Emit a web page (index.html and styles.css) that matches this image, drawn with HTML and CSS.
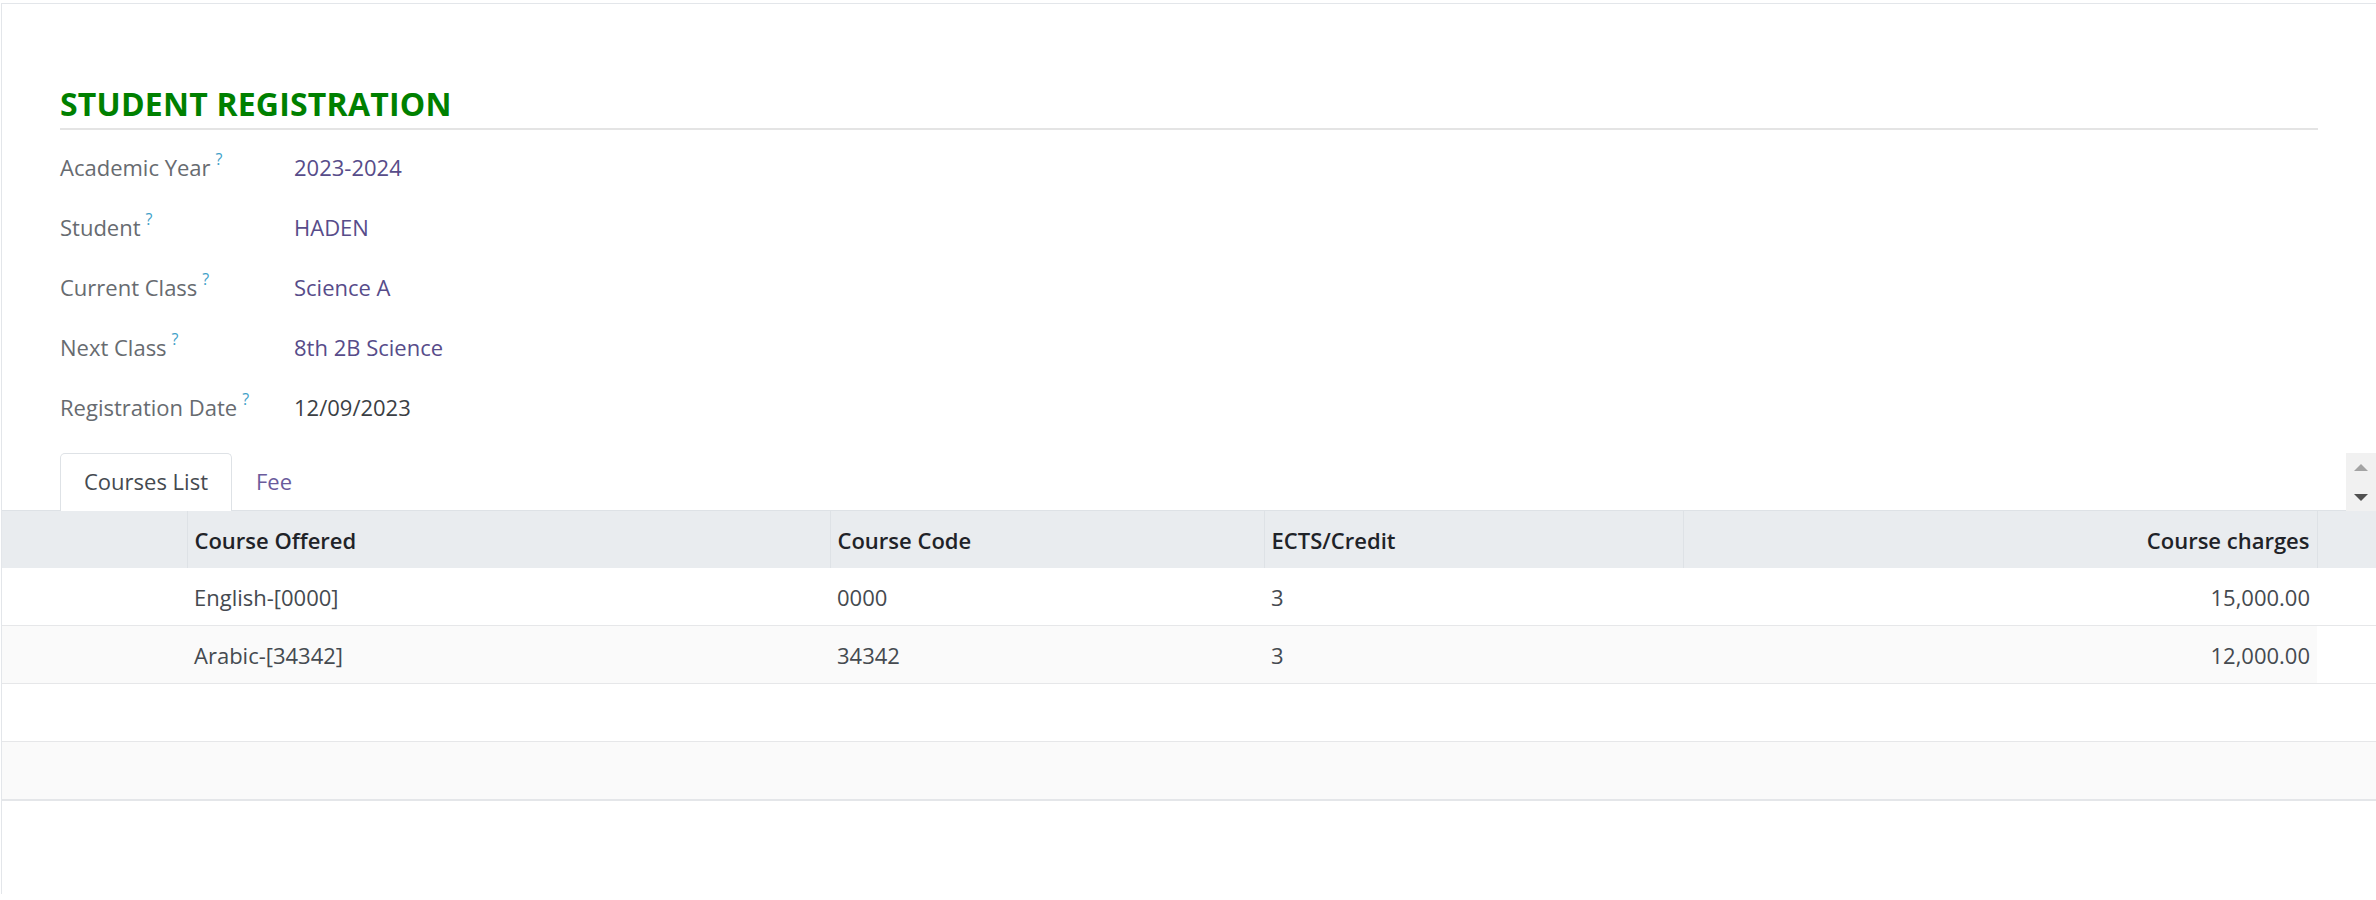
FILE: index.html
```html
<!DOCTYPE html>
<html>
<head>
<meta charset="utf-8">
<title>Student Registration</title>
<link rel="stylesheet" href="styles.css">
</head>
<body>
<div class="sheet">
  <div class="form">
    <h1 class="title">STUDENT REGISTRATION</h1>
    <div class="fields">
      <div class="field"><div class="label">Academic Year<sup class="tip">?</sup></div><div class="value link">2023-2024</div></div>
      <div class="field"><div class="label">Student<sup class="tip">?</sup></div><div class="value link">HADEN</div></div>
      <div class="field"><div class="label">Current Class<sup class="tip">?</sup></div><div class="value link">Science A</div></div>
      <div class="field"><div class="label">Next Class<sup class="tip">?</sup></div><div class="value link">8th 2B Science</div></div>
      <div class="field"><div class="label">Registration Date<sup class="tip">?</sup></div><div class="value">12/09/2023</div></div>
    </div>
  </div>
  <div class="nav">
    <div class="tab active">Courses List</div>
    <div class="tab">Fee</div>
    <div class="scroller">
      <svg width="30" height="58" viewBox="0 0 30 58">
        <polygon points="8,18 22,18 15,11" fill="#a3a3a3"/>
        <polygon points="8,41 22,41 15,48" fill="#505050"/>
      </svg>
    </div>
  </div>
  <table class="list">
    <colgroup>
      <col class="c-handle">
      <col class="c-course">
      <col class="c-code">
      <col class="c-credit">
      <col class="c-charge">
      <col class="c-extra">
    </colgroup>
    <thead>
      <tr>
        <th></th>
        <th>Course Offered</th>
        <th>Course Code</th>
        <th>ECTS/Credit</th>
        <th class="num">Course charges</th>
        <th></th>
      </tr>
    </thead>
    <tbody>
      <tr class="rec">
        <td></td><td>English-[0000]</td><td>0000</td><td>3</td><td class="num">15,000.00</td><td class="blank"></td>
      </tr>
      <tr class="rec odd">
        <td></td><td>Arabic-[34342]</td><td>34342</td><td>3</td><td class="num">12,000.00</td><td class="blank"></td>
      </tr>
      <tr class="empty"><td colspan="6"></td></tr>
      <tr class="empty odd last"><td colspan="6"></td></tr>
    </tbody>
  </table>
</div>
</body>
</html>
```
FILE: styles.css
```css
html, body {
  margin: 0;
  padding: 0;
  background: #ffffff;
}
body {
  font-family: "Open Sans", "Noto Sans", sans-serif;
  font-size: 22px;
  color: #454a50;
}
.sheet {
  margin-top: 3px;
  margin-left: 1px;
  border-top: 1px solid #e3e6ea;
  border-left: 1px solid #e3e6ea;
  min-height: 890px;
}
.form {
  padding: 81px 58px 0 58px;
}
.title {
  margin: 0;
  font-size: 32px;
  line-height: 37px;
  font-weight: 700;
  color: #008000;
  letter-spacing: 0.2px;
  padding-bottom: 6px;
  border-bottom: 2px solid #e4e4e4;
}
.fields {
  margin-top: 7px;
  display: flex;
  flex-direction: column;
}
.field {
  display: flex;
  height: 60px;
  line-height: 60px;
}
.label {
  width: 234px;
  color: #676b70;
  white-space: nowrap;
}
.tip {
  font-size: 16px;
  line-height: 0;
  color: #3fa0c8;
  margin-left: 5px;
  vertical-align: 11px;
}
.value {
  color: #3b3f45;
}
.value.link {
  color: #574c8a;
}
.nav {
  margin-top: 16px;
  display: flex;
  align-items: flex-start;
  padding-left: 58px;
  border-bottom: 1px solid #dee2e6;
  height: 57px;
}
.tab {
  box-sizing: border-box;
  height: 58px;
  margin-bottom: -1px;
  padding: 12px 23px 0 23px;
  line-height: 31.5px;
  border: 1px solid transparent;
  border-bottom: none;
  border-radius: 5px 5px 0 0;
  color: #6a5b9c;
}
.tab.active {
  background: #ffffff;
  border-color: #dee2e6;
  color: #454a50;
  position: relative;
}
.scroller {
  margin-left: auto;
  width: 30px;
  height: 58px;
  background: #f1f1f1;
}
.scroller svg {
  display: block;
}
.list {
  width: 100%;
  border-collapse: collapse;
  table-layout: fixed;
}
.c-handle { width: 185px; }
.c-course { width: 643px; }
.c-code { width: 434px; }
.c-credit { width: 419px; }
.c-charge { width: 634px; }
.c-extra { width: 59px; }
.list th {
  background: #e9ecef;
  height: 57px;
  padding: 0 7px;
  text-align: left;
  font-weight: 600;
  color: #1f2328;
  border-left: 1px solid #dee2e6;
  white-space: nowrap;
}
.list th:first-child {
  border-left: none;
}
.list td {
  height: 57px;
  padding: 0 7px;
  border-bottom: 1px solid #e6e7e9;
  white-space: nowrap;
}
.list .num {
  text-align: right;
}
.list tr.odd td {
  background: #fafafa;
}
.list tr.odd td.blank {
  background: #ffffff;
}
.list tr.last td {
  border-bottom: 2px solid #e4e6e9;
}
```
